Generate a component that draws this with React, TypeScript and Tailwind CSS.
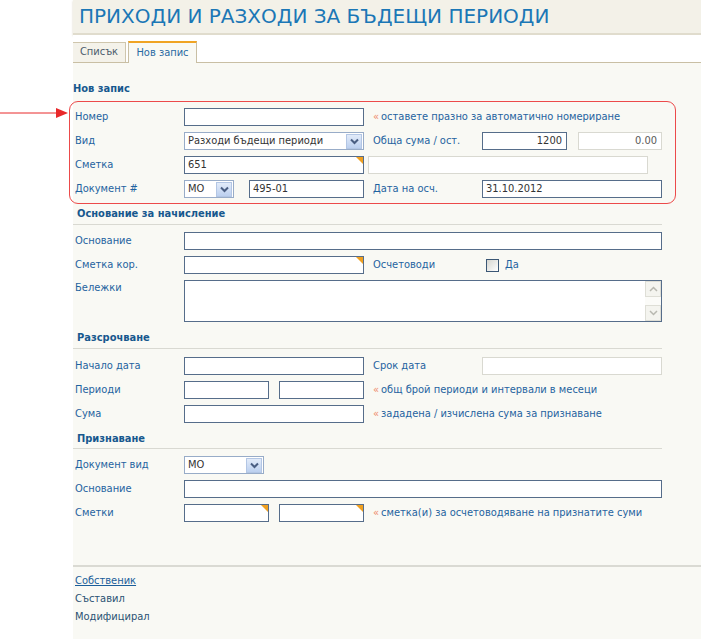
import React from 'react';

const FONT = { fontFamily: '"DejaVu Sans Condensed", "DejaVu Sans", sans-serif' };

const Corner = () => (
  <span className="absolute right-0 top-0 w-0 h-0 border-t-[7px] border-l-[7px] border-t-[#f0a020] border-l-transparent" />
);

interface InputProps {
  w: string;
  value?: string;
  right?: boolean;
  disabled?: boolean;
  corner?: boolean;
  ml?: string;
}

const Input: React.FC<InputProps> = ({ w, value = '', right, disabled, corner, ml = '' }) => (
  <div
    className={`relative h-[18px] ${w} ${ml} bg-white border flex items-center px-[3px] text-[11px] ${
      disabled ? 'border-[#d9d9d1] text-[#5a5a5a]' : 'border-[#566d8a] text-[#333]'
    } ${right ? 'justify-end pr-[4px]' : ''}`}
  >
    {value}
    {corner && <Corner />}
  </div>
);

const Select: React.FC<{ w: string; value: string }> = ({ w, value }) => (
  <div className={`relative h-[18px] ${w} bg-white border border-[#98acc8] flex items-center pl-[3px] text-[11px] text-[#333]`}>
    <span className="flex-1 truncate">{value}</span>
    <span className="h-[15px] w-[16px] mr-[1px] border border-[#b3c6e4] bg-gradient-to-b from-[#e2ebf9] to-[#bcd0ef] flex items-center justify-center">
      <svg width="9" height="7" viewBox="0 0 9 7">
        <path d="M1 1.5 L4.5 5 L8 1.5" fill="none" stroke="#4a5e82" strokeWidth="2" />
      </svg>
    </span>
  </div>
);

const Label: React.FC<{ children: React.ReactNode; w?: string; ml?: string }> = ({ children, w = 'w-[109px]', ml = 'ml-[2px]' }) => (
  <span className={`${w} ${ml} shrink-0 text-[11px] text-[#1f63a0] leading-[16px]`}>{children}</span>
);

const Note: React.FC<{ children: React.ReactNode }> = ({ children }) => (
  <span className="ml-[9px] text-[11px] text-[#1f63a0] leading-[16px]">
    <span className="text-[#ee8a6a] mr-[2px]">«</span>
    {children}
  </span>
);

const Row: React.FC<{ children: React.ReactNode }> = ({ children }) => (
  <div className="h-[24px] flex items-center">{children}</div>
);

const Section: React.FC<{ title: string; pt?: string; h: string }> = ({ title, pt = 'pt-[5px]', h }) => (
  <div className={`${h} ${pt} w-[589px] border-b border-[#d9d9d2] pl-[4px]`}>
    <span className="text-[11px] font-bold text-[#17588e] leading-[16px] block">{title}</span>
  </div>
);

const Checkbox = () => (
  <span className="w-[13px] h-[13px] border border-[#3b5775] bg-gradient-to-br from-[#d6d6d0] to-[#ffffff] inline-block" />
);

export default function App() {
  return (
    <div className="relative w-[701px] h-[639px] flex bg-white overflow-hidden" style={FONT}>
      <div className="w-[73px] shrink-0 bg-white" />
      <div className="flex-1 bg-[#f9f9f4] flex flex-col">
        <div className="h-[35px] bg-[#f3f1e8] border-b-[2px] border-[#e0dccd] shadow-[0_1px_2px_#d8d4c4] pl-[6px] pt-[3px]">
          <h1 className="text-[20px] leading-[26px] text-[#1b77b6]" style={{ fontFamily: '"DejaVu Sans", sans-serif' }}>
            ПРИХОДИ И РАЗХОДИ ЗА БЪДЕЩИ ПЕРИОДИ
          </h1>
        </div>
        <div className="h-[28px] bg-white border-b border-[#c9bfa4] flex items-end">
          <div className="h-[20px] w-[53px] bg-[#f4f2ea] border border-b-0 border-[#cfc6ad] border-l-0 flex items-center justify-center text-[11px] text-[#4b5b6b]">
            Списък
          </div>
          <div className="h-[22px] w-[69px] ml-[2px] -mb-px bg-[#f9f9f4] border-x border-[#c9bfa4] border-t-[2px] border-t-[#f0a424] flex items-center justify-center text-[11px] text-[#2a6aa2]">
            Нов запис
          </div>
        </div>

        <div className="pt-[18px] text-[11px] font-bold text-[#17588e] leading-[16px]">Нов запис</div>
        <div className="mt-[8px]">
          <Row>
            <Label>Номер</Label>
            <Input w="w-[180px]" />
            <Note>оставете празно за автоматично номериране</Note>
          </Row>
          <Row>
            <Label>Вид</Label>
            <Select w="w-[180px]" value="Разходи бъдещи периоди" />
            <Label ml="ml-[9px]">Обща сума / ост.</Label>
            <Input w="w-[85px]" value="1200" right />
            <Input w="w-[84px]" ml="ml-[11px]" value="0.00" right disabled />
          </Row>
          <Row>
            <Label>Сметка</Label>
            <Input w="w-[180px]" value="651" corner />
            <Input w="w-[280px]" ml="ml-[4px]" disabled />
          </Row>
          <Row>
            <Label>Документ #</Label>
            <Select w="w-[50px]" value="МО" />
            <Input w="w-[115px]" ml="ml-[15px]" value="495-01" />
            <Label ml="ml-[9px]">Дата на осч.</Label>
            <Input w="w-[180px]" value="31.10.2012" />
          </Row>
        </div>

        <Section title="Основание за начисление" h="h-[24px]" />
        <div className="mt-[4px]">
          <Row>
            <Label>Основание</Label>
            <Input w="w-[478px]" />
          </Row>
          <Row>
            <Label>Сметка кор.</Label>
            <Input w="w-[180px]" corner />
            <Label ml="ml-[9px]" w="w-[113px]">Осчетоводи</Label>
            <Checkbox />
            <span className="ml-[6px] text-[11px] text-[#1f63a0]">Да</span>
          </Row>
          <div className="h-[48px] flex items-start pt-[3px]">
            <Label>Бележки</Label>
            <div className="relative h-[42px] w-[478px] bg-white border border-[#566d8a] flex justify-end">
              <div className="w-[16px] h-full flex flex-col justify-between bg-[#fbfbf8]">
                <span className="h-[16px] border border-[#deded6] bg-[#f4f4ef] flex items-center justify-center">
                  <svg width="9" height="6" viewBox="0 0 9 6">
                    <path d="M1 5 L4.5 1.5 L8 5" fill="none" stroke="#b8b8b0" strokeWidth="1.5" />
                  </svg>
                </span>
                <span className="h-[16px] border border-[#deded6] bg-[#f4f4ef] flex items-center justify-center">
                  <svg width="9" height="6" viewBox="0 0 9 6">
                    <path d="M1 1 L4.5 4.5 L8 1" fill="none" stroke="#b8b8b0" strokeWidth="1.5" />
                  </svg>
                </span>
              </div>
            </div>
          </div>
        </div>

        <Section title="Разсрочване" h="h-[24px]" />
        <div className="mt-[5px]">
          <Row>
            <Label>Начало дата</Label>
            <Input w="w-[180px]" />
            <Label ml="ml-[9px]">Срок дата</Label>
            <Input w="w-[180px]" disabled />
          </Row>
          <Row>
            <Label>Периоди</Label>
            <Input w="w-[85px]" />
            <Input w="w-[85px]" ml="ml-[10px]" />
            <Note>общ брой периоди и интервали в месеци</Note>
          </Row>
          <Row>
            <Label>Сума</Label>
            <Input w="w-[180px]" />
            <Note>зададена / изчислена сума за признаване</Note>
          </Row>
        </div>

        <Section title="Признаване" h="h-[23px]" />
        <div className="mt-[4px]">
          <Row>
            <Label>Документ вид</Label>
            <Select w="w-[80px]" value="МО" />
          </Row>
          <Row>
            <Label>Основание</Label>
            <Input w="w-[478px]" />
          </Row>
          <Row>
            <Label>Сметки</Label>
            <Input w="w-[85px]" corner />
            <Input w="w-[85px]" ml="ml-[10px]" corner />
            <Note>сметка(и) за осчетоводяване на признатите суми</Note>
          </Row>
        </div>

        <div className="mt-[40px] border-t-[2px] border-[#dadad3] pt-[5px] pl-[2px] text-[11px] leading-[18px]">
          <div className="text-[#1b5e9a] underline">Собственик</div>
          <div className="text-[#2a5273]">Съставил</div>
          <div className="text-[#2a5273]">Модифицирал</div>
        </div>
      </div>

      <div className="absolute left-[69px] top-[101px] w-[607px] h-[103px] border border-[#ec4a4a] rounded-[9px] pointer-events-none" />
      <svg className="absolute left-0 top-[107px]" width="70" height="12" viewBox="0 0 70 12">
        <line x1="0" y1="6" x2="58" y2="6" stroke="#e8282a" strokeWidth="1" />
        <polygon points="56,1 68,6 56,11" fill="#e8282a" />
      </svg>
    </div>
  );
}
